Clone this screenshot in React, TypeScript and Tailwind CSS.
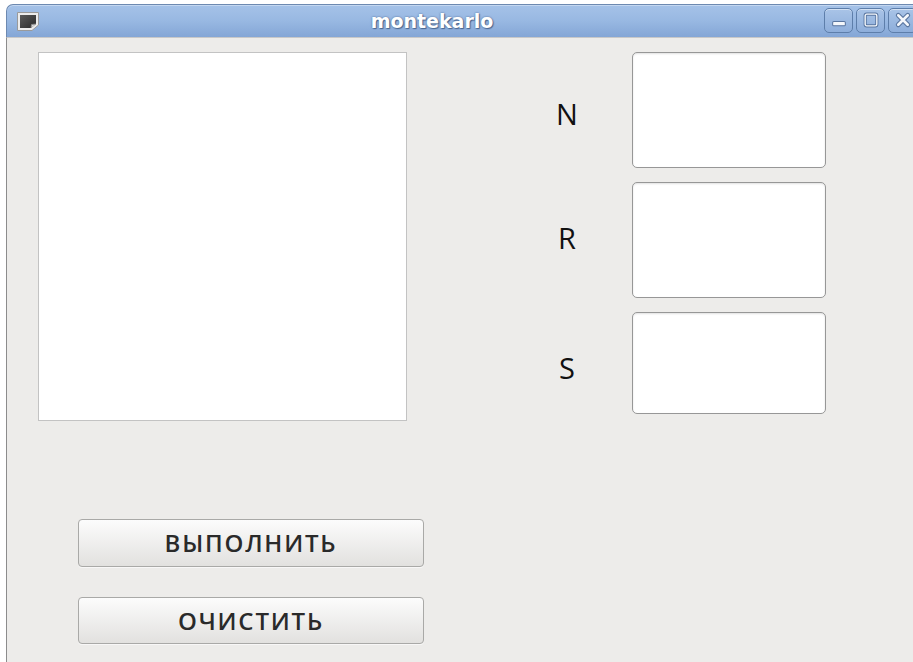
import React from "react";

function WindowIcon() {
  return (
    <svg width="24" height="21" viewBox="0 0 24 21">
      <path d="M1.5 1.5 H22.5 V14 L16 19.5 H1.5 Z" fill="#ececec" stroke="#9a9a9a" strokeWidth="1" />
      <defs>
        <linearGradient id="scr" x1="0" y1="0" x2="1" y2="1">
          <stop offset="0" stopColor="#5a5a5a" />
          <stop offset="1" stopColor="#2a2a2a" />
        </linearGradient>
      </defs>
      <path d="M4 4 H20 V13 L15 17 H4 Z" fill="url(#scr)" />
      <path d="M15 17 L15.5 13.5 L20 13" fill="#d8d8d8" stroke="#8a8a8a" strokeWidth="0.8" />
    </svg>
  );
}

function TitleButton({ kind }: { kind: "min" | "max" | "close" }) {
  return (
    <div className="w-[29px] h-[25px] rounded-[5px] border border-[#5d7eaa] bg-gradient-to-b from-[#a9c4e7] to-[#8eaedb] flex items-center justify-center shadow-[inset_0_1px_0_rgba(255,255,255,0.5)]">
      <svg width="18" height="18" viewBox="0 0 17 17">
        {kind === "min" && (
          <rect x="2.5" y="10" width="12" height="4" rx="1" fill="#f4f7fb" stroke="#5a76a0" strokeWidth="1" />
        )}
        {kind === "max" && (
          <g>
            <rect x="3" y="3" width="11" height="11" rx="1.5" fill="none" stroke="#5a76a0" strokeWidth="3" />
            <rect x="3" y="3" width="11" height="11" rx="1.5" fill="none" stroke="#f4f7fb" strokeWidth="1.3" />
          </g>
        )}
        {kind === "close" && (
          <g strokeLinecap="round">
            <path d="M4 4 L13 13 M13 4 L4 13" stroke="#5a76a0" strokeWidth="4.5" />
            <path d="M4 4 L13 13 M13 4 L4 13" stroke="#f4f7fb" strokeWidth="2.4" />
          </g>
        )}
      </svg>
    </div>
  );
}

function Field({ h }: { h: string }) {
  return (
    <div
      className={`w-[194px] ${h} bg-white rounded-[5px] border-[1.5px] border-[#979797] shadow-[inset_0_1px_2px_rgba(0,0,0,0.12)]`}
    />
  );
}

function PushButton({ label, h }: { label: string; h: string }) {
  return (
    <button
      className={`w-[346px] ${h} rounded-[4px] border border-[#a9a9a7] bg-gradient-to-b from-[#fcfcfc] to-[#e2e1df] flex items-center justify-center text-[24px] font-semibold tracking-[1.8px] text-[#2a2a2a] shadow-[0_1px_0_rgba(255,255,255,0.6)]`}
      style={{ fontFamily: '"Open Sans", "Noto Sans", sans-serif' }}
    >
      {label}
    </button>
  );
}

export default function App() {
  const labelFont = { fontFamily: '"Open Sans", "Noto Sans", sans-serif' };
  return (
    <div className="w-[913px] h-[662px] bg-white overflow-hidden pt-[4px] pl-[6px]">
      <div className="w-[940px] h-[658px] flex flex-col">
        {/* title bar */}
        <div className="h-[33px] shrink-0 rounded-tl-[7px] rounded-tr-[7px] border-t border-l border-[#6d89b0] bg-gradient-to-b from-[#a5c2e8] via-[#98b8e2] to-[#84a6d6] flex items-center pl-[9px] shadow-[inset_0_1px_0_rgba(255,255,255,0.35)]">
          <WindowIcon />
          <div
            className="flex-1 text-center text-white font-bold text-[19px] leading-none [text-shadow:0_0_2px_#4a6690,1px_1px_1px_#4a6690]"
            style={{ fontFamily: '"DejaVu Sans", "Liberation Sans", sans-serif' }}
          >
            montekarlo
          </div>
          <div className="flex gap-[3px] pr-[29px] pb-[2px]">
            <TitleButton kind="min" />
            <TitleButton kind="max" />
            <TitleButton kind="close" />
          </div>
        </div>

        {/* client area */}
        <div className="flex-1 bg-[#edecea] border-l border-[#8c8c8c] border-t border-t-[#c8c8c8] flex pl-[31px] pt-[14px]">
          <div className="flex flex-col">
            <div className="w-[369px] h-[369px] bg-white border border-[#c3c3c3]" />
            <div className="ml-[40px] mt-[98px] flex flex-col gap-[30px]">
              <PushButton label="ВЫПОЛНИТЬ" h="h-[48px]" />
              <PushButton label="ОЧИСТИТЬ" h="h-[47px]" />
            </div>
          </div>

          <div className="ml-[113px] flex flex-col gap-[14px]">
            <div className="flex items-center">
              <div className="w-[60px] text-center text-[29px] text-[#111] pt-[7px]" style={labelFont}>N</div>
              <div className="ml-[35px]"><Field h="h-[116px]" /></div>
            </div>
            <div className="flex items-center">
              <div className="w-[60px] text-center text-[29px] text-[#111] pb-[4px]" style={labelFont}>R</div>
              <div className="ml-[35px]"><Field h="h-[116px]" /></div>
            </div>
            <div className="flex items-center">
              <div className="w-[60px] text-center text-[29px] text-[#111] pt-[10px]" style={labelFont}>S</div>
              <div className="ml-[35px]"><Field h="h-[102px]" /></div>
            </div>
          </div>
        </div>
      </div>
    </div>
  );
}
